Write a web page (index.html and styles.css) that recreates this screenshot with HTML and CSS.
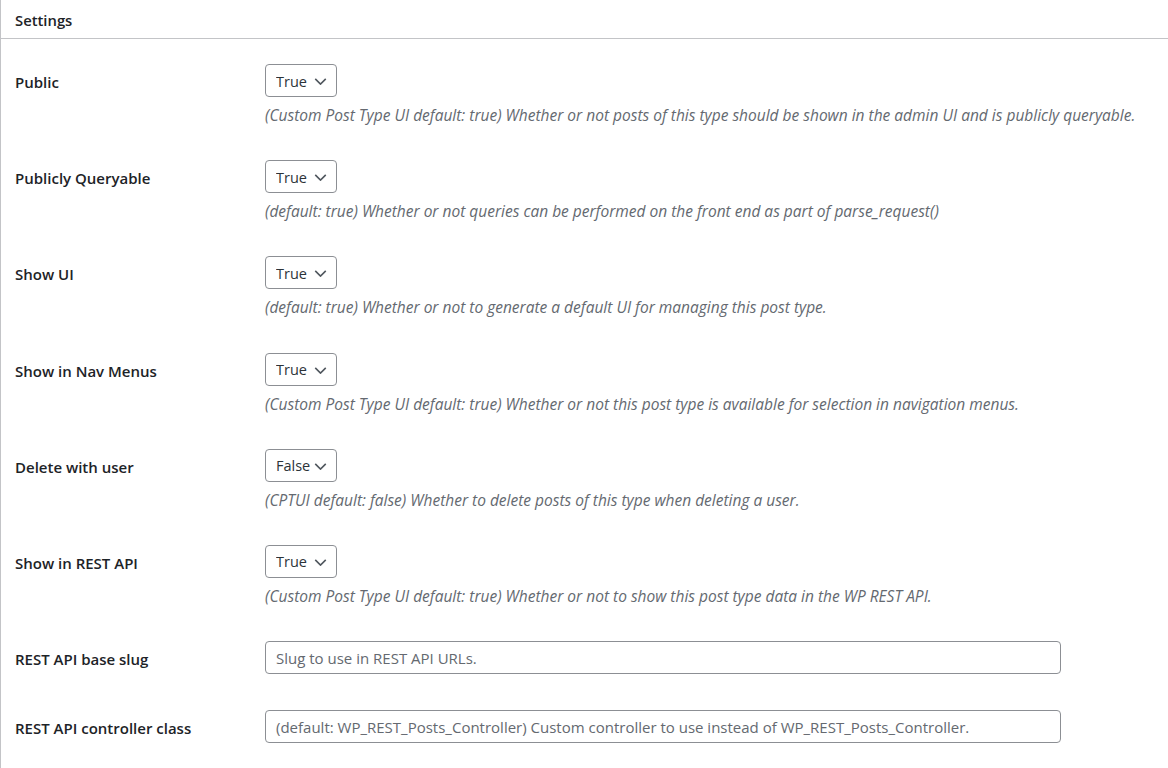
FILE: index.html
```html
<!DOCTYPE html>
<html lang="en">
<head>
    <meta charset="UTF-8">
    <meta name="viewport" content="width=device-width, initial-scale=1.0">
    <title>Settings</title>
    <link rel="stylesheet" href="styles.css">
</head>
<body>
    <div class="postbox">
        <div class="postbox-header">
            <h2>Settings</h2>
        </div>

        <div class="form-table">
            <div class="form-row">
                <label class="form-label" for="public">Public</label>
                <div class="form-field">
                    <span class="select-wrap">
                        <select id="public"><option>True</option><option>False</option></select>
                        <svg class="chevron" viewBox="0 0 14 8" aria-hidden="true"><polyline points="1,1 7,7 13,1"/></svg>
                    </span>
                    <p class="description">(Custom Post Type UI default: true) Whether or not posts of this type should be shown in the admin UI and is publicly queryable.</p>
                </div>
            </div>

            <div class="form-row">
                <label class="form-label" for="publicly_queryable">Publicly Queryable</label>
                <div class="form-field">
                    <span class="select-wrap">
                        <select id="publicly_queryable"><option>True</option><option>False</option></select>
                        <svg class="chevron" viewBox="0 0 14 8" aria-hidden="true"><polyline points="1,1 7,7 13,1"/></svg>
                    </span>
                    <p class="description">(default: true) Whether or not queries can be performed on the front end as part of parse_request()</p>
                </div>
            </div>

            <div class="form-row">
                <label class="form-label" for="show_ui">Show UI</label>
                <div class="form-field">
                    <span class="select-wrap">
                        <select id="show_ui"><option>True</option><option>False</option></select>
                        <svg class="chevron" viewBox="0 0 14 8" aria-hidden="true"><polyline points="1,1 7,7 13,1"/></svg>
                    </span>
                    <p class="description">(default: true) Whether or not to generate a default UI for managing this post type.</p>
                </div>
            </div>

            <div class="form-row">
                <label class="form-label" for="show_in_nav_menus">Show in Nav Menus</label>
                <div class="form-field">
                    <span class="select-wrap">
                        <select id="show_in_nav_menus"><option>True</option><option>False</option></select>
                        <svg class="chevron" viewBox="0 0 14 8" aria-hidden="true"><polyline points="1,1 7,7 13,1"/></svg>
                    </span>
                    <p class="description">(Custom Post Type UI default: true) Whether or not this post type is available for selection in navigation menus.</p>
                </div>
            </div>

            <div class="form-row">
                <label class="form-label" for="delete_with_user">Delete with user</label>
                <div class="form-field">
                    <span class="select-wrap">
                        <select id="delete_with_user"><option>False</option><option>True</option></select>
                        <svg class="chevron" viewBox="0 0 14 8" aria-hidden="true"><polyline points="1,1 7,7 13,1"/></svg>
                    </span>
                    <p class="description">(CPTUI default: false) Whether to delete posts of this type when deleting a user.</p>
                </div>
            </div>

            <div class="form-row">
                <label class="form-label" for="show_in_rest">Show in REST API</label>
                <div class="form-field">
                    <span class="select-wrap">
                        <select id="show_in_rest"><option>True</option><option>False</option></select>
                        <svg class="chevron" viewBox="0 0 14 8" aria-hidden="true"><polyline points="1,1 7,7 13,1"/></svg>
                    </span>
                    <p class="description">(Custom Post Type UI default: true) Whether or not to show this post type data in the WP REST API.</p>
                </div>
            </div>

            <div class="form-row input-row">
                <label class="form-label" for="rest_base">REST API base slug</label>
                <div class="form-field">
                    <input type="text" id="rest_base" class="regular-text" placeholder="Slug to use in REST API URLs.">
                </div>
            </div>

            <div class="form-row input-row">
                <label class="form-label" for="rest_controller_class">REST API controller class</label>
                <div class="form-field">
                    <input type="text" id="rest_controller_class" class="regular-text" placeholder="(default: WP_REST_Posts_Controller) Custom controller to use instead of WP_REST_Posts_Controller.">
                </div>
            </div>
        </div>
    </div>
</body>
</html>
```

FILE: styles.css
```css
/* page */
body {
    margin: 0;
    background-color: #fff;
    font-family: "Open Sans", "Noto Sans", sans-serif;
    font-size: 15px;
    color: #1d2327;
}

.postbox {
    min-height: 100vh;
    border-left: 1px solid #c3c4c7;
    background-color: #fff;
}

/* header */
.postbox-header {
    height: 38px;
    padding-left: 14px;
    border-bottom: 1px solid #c3c4c7;
    display: flex;
    align-items: center;
}

.postbox-header h2 {
    margin: 0;
    padding-top: 1px;
    font-size: 14.8px;
    font-weight: 600;
}

/* rows */
.form-row {
    display: grid;
    grid-template-columns: 250px 1fr;
    align-items: start;
    padding: 25px 14px 9.2px;
}

.form-row.input-row {
    padding-bottom: 11px;
}

.form-label {
    padding-top: 4px;
    font-weight: 600;
    line-height: 29px;
}

.form-field {
    display: flex;
    flex-direction: column;
    align-items: flex-start;
}

/* select */
.select-wrap {
    position: relative;
    display: inline-block;
}

.select-wrap select {
    appearance: none;
    -webkit-appearance: none;
    width: 72px;
    height: 33px;
    margin: 0;
    padding: 1px 24px 0 10px;
    font-family: inherit;
    font-size: 14.5px;
    color: #2c3338;
    background-color: #fff;
    border: 1px solid #8c8f94;
    border-radius: 4px;
}

.chevron {
    position: absolute;
    top: 14px;
    right: 10px;
    width: 13px;
    height: 7px;
    fill: none;
    stroke: #50575e;
    stroke-width: 1.8;
    pointer-events: none;
}

/* descriptions */
.description {
    margin: 8px 0 0;
    font-size: 15.5px;
    font-style: italic;
    line-height: 21px;
    color: #646970;
}

/* text inputs */
.regular-text {
    box-sizing: border-box;
    width: 796px;
    height: 33px;
    margin: 0;
    padding: 0 10px;
    font-family: inherit;
    font-size: 15px;
    color: #2c3338;
    border: 1px solid #8c8f94;
    border-radius: 4px;
}

.regular-text::placeholder {
    color: #646970;
}
```
